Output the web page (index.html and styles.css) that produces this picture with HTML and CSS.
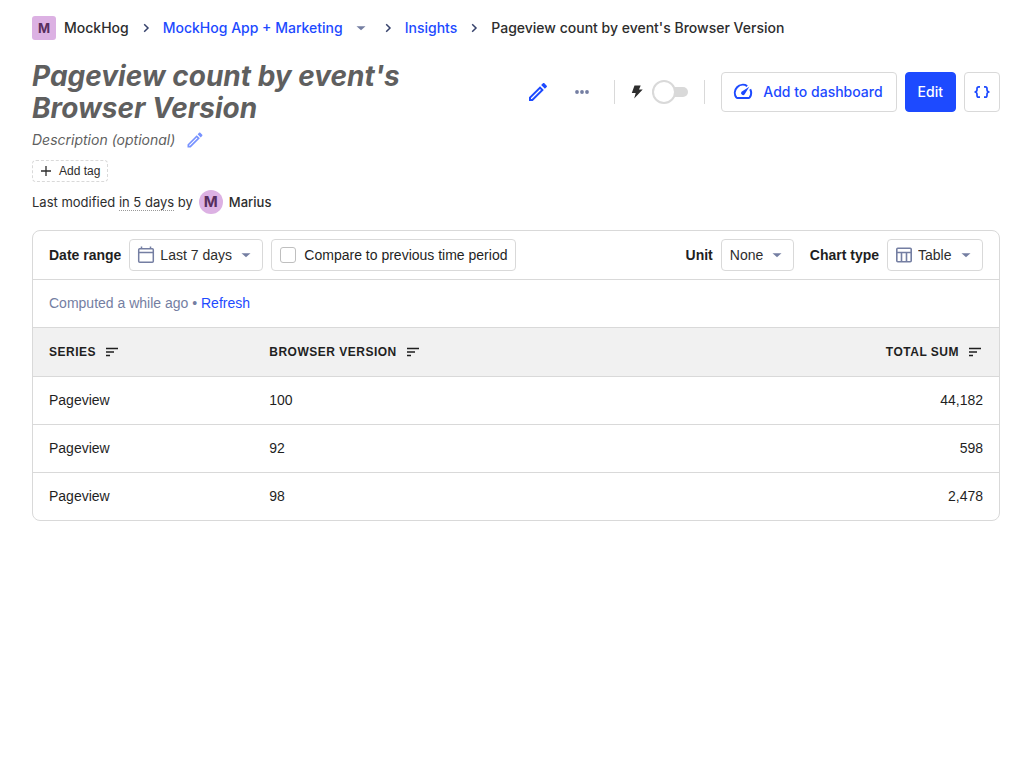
FILE: index.html
```html
<!DOCTYPE html>
<html lang="en">
<head>
<meta charset="utf-8">
<meta name="viewport" content="width=device-width, initial-scale=1">
<title>Pageview count by event's Browser Version</title>
<link rel="stylesheet" href="styles.css">
</head>
<body>
<svg class="sprite" aria-hidden="true">
  <symbol id="chevron" viewBox="0 0 16 16"><path d="M6.200 4.200 10 8l-3.800 3.800" fill="none" stroke="currentColor" stroke-width="1.500"/></symbol>
  <symbol id="caret" viewBox="0 0 24 24"><path d="m6 9.500 6 5.500 6-5.500z" fill="currentColor"/></symbol>
  <symbol id="pencil" viewBox="0 0 24 24"><path d="M14.060 9.020l.92.920L5.920 19H5v-.920l9.060-9.060M17.660 3c-.250 0-.510.100-.700.290l-1.830 1.830 3.750 3.750 1.830-1.830c.390-.390.390-1.020 0-1.410l-2.340-2.340c-.200-.200-.450-.290-.710-.290zm-3.600 3.190L3 17.250V21h3.750L17.810 9.940l-3.750-3.750z" fill="currentColor"/></symbol>
  <symbol id="sort" viewBox="0 0 16 10"><path d="M2 1.500h12M2 5h8M2 8.500h4" fill="none" stroke="currentColor" stroke-width="1.400"/></symbol>
</svg>
<main class="page">
  <nav class="breadcrumbs" aria-label="Breadcrumb">
    <span class="crumb"><span class="letter letter-square">M</span>MockHog</span>
    <svg class="crumb-sep"><use href="#chevron"/></svg>
    <span class="crumb"><a href="#project">MockHog App + Marketing</a><svg class="crumb-caret"><use href="#caret"/></svg></span>
    <svg class="crumb-sep"><use href="#chevron"/></svg>
    <a class="crumb" href="#insights">Insights</a>
    <svg class="crumb-sep"><use href="#chevron"/></svg>
    <span class="crumb">Pageview count by event's Browser Version</span>
  </nav>

  <header class="title-row">
    <h1 class="title">Pageview count by event's Browser Version</h1>
    <button class="icon-button edit-title" type="button" aria-label="Edit name"><svg class="icon-24"><use href="#pencil"/></svg></button>
    <div class="actions">
      <button class="icon-button more" type="button" aria-label="More"><svg class="icon-24" viewBox="0 0 24 24" fill="currentColor"><circle cx="7" cy="12" r="1.900"/><circle cx="12" cy="12" r="1.900"/><circle cx="17" cy="12" r="1.900"/></svg></button>
      <span class="divider"></span>
      <label class="switch">
        <svg class="bolt" viewBox="0 0 12 14" aria-hidden="true"><path d="M3.500.5h6.200L8 4.500h3.700L3.200 13.600 4.700 8H.8z" fill="currentColor"/></svg>
        <input class="switch-input" type="checkbox" role="switch" aria-label="Faster results">
        <span class="switch-track"></span>
      </label>
      <span class="divider"></span>
      <button class="button" type="button"><svg class="gauge" viewBox="0 0 20 18" fill="none" stroke="currentColor" stroke-width="2"><path d="M14.200 3.100A8 8 0 0 0 3.300 14.400Q3.800 15 4.500 15h11Q16.200 15 16.700 14.400A8 8 0 0 0 17.200 6.200"/><path d="M16.300 3.700 11.700 11.300A2 2 0 0 1 8.500 8.700z" fill="currentColor" stroke="none"/></svg>Add to dashboard</button>
      <button class="button button-primary" type="button">Edit</button>
      <button class="button button-code" type="button" aria-label="View source"><svg class="braces" viewBox="0 0 18 14" fill="none" stroke="currentColor" stroke-width="1.700"><path d="M7 1.800H5.800Q4 1.800 4 3.500v1.300Q4 7 1.500 7 4 7 4 9.200v1.300q0 1.700 1.800 1.700H7M11 1.800h1.200Q14 1.800 14 3.500v1.300Q14 7 16.500 7 14 7 14 9.200v1.300q0 1.700-1.800 1.700H11"/></svg></button>
    </div>
  </header>

  <div class="description">Description (optional)<button class="icon-button edit-description" type="button" aria-label="Edit description"><svg class="icon-20"><use href="#pencil"/></svg></button></div>
  <button class="add-tag" type="button"><svg class="plus" viewBox="0 0 10 10"><path d="M5 0v10M0 5h10" stroke="currentColor" stroke-width="1.300"/></svg>Add tag</button>
  <div class="modified">
    <span>Last modified <span class="when">in 5 days</span> by</span>
    <span class="letter letter-round">M</span>
    <span class="author">Marius</span>
  </div>

  <section class="card">
    <div class="toolbar">
      <div class="group">
        <label class="label" for="range">Date range</label>
        <div class="field field-icon">
          <svg class="icon-20" viewBox="0 0 20 20" fill="none" stroke="currentColor" stroke-width="1.500"><rect x="2.700" y="3.700" width="14.600" height="13.600" rx="1"/><path d="M2.500 7.500h15M5.500 1.500V4M14.500 1.500V4"/></svg>
          <select class="select" id="range"><option>Last 7 days</option></select>
          <svg class="caret"><use href="#caret"/></svg>
        </div>
        <label class="field compare"><input class="checkbox" type="checkbox">Compare to previous time period</label>
      </div>
      <div class="group group-right">
        <div class="group">
          <label class="label" for="unit">Unit</label>
          <div class="field">
            <select class="select" id="unit"><option>None</option></select>
            <svg class="caret"><use href="#caret"/></svg>
          </div>
        </div>
        <div class="group">
          <label class="label" for="chart">Chart type</label>
          <div class="field field-icon">
            <svg class="icon-20" viewBox="0 0 20 20" fill="none" stroke="currentColor" stroke-width="1.600"><rect x="2.800" y="3.300" width="14.400" height="13.400" rx="1"/><path d="M2.500 7.500h15M7.500 7.500v9M12.500 7.500v9"/></svg>
            <select class="select" id="chart"><option>Table</option></select>
            <svg class="caret"><use href="#caret"/></svg>
          </div>
        </div>
      </div>
    </div>
    <div class="computed">Computed a while ago • <a href="#refresh">Refresh</a></div>
    <table class="table">
      <thead>
        <tr>
          <th class="col-series"><span class="heading">Series<svg class="sort"><use href="#sort"/></svg></span></th>
          <th><span class="heading">Browser version<svg class="sort"><use href="#sort"/></svg></span></th>
          <th class="number"><span class="heading">Total sum<svg class="sort"><use href="#sort"/></svg></span></th>
        </tr>
      </thead>
      <tbody>
        <tr><td>Pageview</td><td>100</td><td class="number">44,182</td></tr>
        <tr><td>Pageview</td><td>92</td><td class="number">598</td></tr>
        <tr><td>Pageview</td><td>98</td><td class="number">2,478</td></tr>
      </tbody>
    </table>
  </section>
</main>
</body>
</html>
```
FILE: styles.css
```css
:root {
  --blue: #1d4aff;
  --ink: #2d2d2d;
  --strong: #1f1f1f;
  --muted: #747ea2;
  --border: #d9d9d9;
  --body: "Liberation Sans", Arial, sans-serif;
  --brand: Inter, sans-serif;
}

* { box-sizing: border-box; }

body {
  margin: 0;
  background: #fff;
  color: var(--ink);
  font: 14px/20px var(--body);
}

a { color: var(--blue); text-decoration: none; }

button, select, input { margin: 0; font: inherit; color: inherit; }

svg { display: block; flex: none; }

.sprite { position: absolute; width: 0; height: 0; }

.page { padding: 16px 32px; }

.breadcrumbs {
  display: flex;
  align-items: center;
  gap: 9px;
  height: 24px;
  font: 500 14px/24px var(--brand);
}

.crumb { display: flex; align-items: center; gap: 8px; white-space: nowrap; }

.crumb-sep { width: 16px; height: 16px; color: #35416b; }

.crumb-caret { width: 20px; height: 18px; color: var(--muted); }

.letter {
  display: flex;
  align-items: center;
  justify-content: center;
  width: 24px;
  height: 24px;
  background: #dcb1e3;
  color: #572e5e;
  font: 700 13px/24px var(--brand);
}

.letter-square { border-radius: 3px; }

.letter-round { border-radius: 50%; font-size: 15px; }

.title-row {
  display: flex;
  align-items: center;
  gap: 8px;
  margin-top: 20px;
}

.title {
  flex: 1;
  margin: 0;
  color: #5f5f5f;
  font: italic 700 28px/32px var(--brand);
}

.icon-button {
  display: flex;
  align-items: center;
  justify-content: center;
  padding: 0;
  border: 0;
  background: none;
}

.icon-24 { width: 24px; height: 24px; }

.icon-20 { width: 20px; height: 20px; }

.edit-title { width: 40px; height: 40px; color: var(--blue); }

.more { width: 32px; height: 40px; color: var(--muted); }

.actions { display: flex; align-items: center; gap: 8px; }

.divider { width: 1px; height: 24px; margin: 0 8px; background: var(--border); }

.switch { display: flex; align-items: center; gap: 9px; }

.bolt { width: 12px; height: 14px; }

.switch-input { position: absolute; opacity: 0; }

.switch-track {
  display: flex;
  align-items: center;
  width: 36px;
  height: 10px;
  border-radius: 5px;
  background: var(--border);
}

.switch-track::before {
  content: "";
  flex: none;
  width: 20px;
  height: 20px;
  border: 2px solid var(--border);
  border-radius: 50%;
  background: #fff;
}

.switch-input:checked + .switch-track { justify-content: flex-end; }

.button {
  display: flex;
  align-items: center;
  gap: 10px;
  height: 40px;
  padding: 0 13px 0 11px;
  border: 1px solid var(--border);
  border-radius: 4px;
  background: #fff;
  color: var(--blue);
  font: 500 14px/24px var(--brand);
  white-space: nowrap;
}

.button-primary { padding: 0 12px; border-color: var(--blue); background: var(--blue); color: #fff; }

.button-code { padding: 0 8px; }

.gauge { width: 20px; height: 18px; }

.braces { width: 18px; height: 14px; }

.description {
  display: flex;
  align-items: center;
  gap: 6px;
  height: 32px;
  color: #5f5f5f;
  font: italic 400 14px/20px var(--brand);
}

.edit-description { width: 28px; height: 28px; color: #7792ff; }

.add-tag {
  display: flex;
  align-items: center;
  gap: 8px;
  height: 22px;
  margin-top: 4px;
  padding: 0 7px 0 8px;
  border: 1px dashed var(--border);
  border-radius: 4px;
  background: #fff;
  font-size: 12px;
  line-height: 20px;
}

.plus { width: 10px; height: 10px; }

.modified {
  display: flex;
  align-items: center;
  gap: 6px;
  margin: 8px 0 16px;
  font: 400 13px/24px var(--brand);
}

.when { display: inline-block; border-bottom: 1px dotted #999; line-height: 16px; }

.author { font-weight: 500; }

.card { overflow: hidden; border: 1px solid var(--border); border-radius: 8px; color: var(--strong); }

.toolbar {
  display: flex;
  align-items: center;
  justify-content: space-between;
  padding: 8px 16px;
  border-bottom: 1px solid var(--border);
}

.group { display: flex; align-items: center; gap: 8px; }

.group-right { gap: 16px; }

.label { font-weight: 700; }

.field {
  display: flex;
  align-items: center;
  height: 32px;
  padding: 0 7px 0 8px;
  border: 1px solid var(--border);
  border-radius: 4px;
}

.field-icon { gap: 4px; padding-left: 6px; color: var(--muted); }

.select {
  appearance: none;
  padding: 0;
  border: 0;
  background: none;
  color: var(--ink);
}

.caret { width: 18px; height: 18px; margin-left: 4px; color: var(--muted); }

.field-icon .caret { margin-left: 1px; }

.compare { gap: 8px; padding-right: 8px; }

.checkbox {
  appearance: none;
  width: 16px;
  height: 16px;
  border: 1px solid #bfbfbf;
  border-radius: 3px;
}

.computed {
  padding: 13px 16px 14px;
  border-bottom: 1px solid var(--border);
  color: var(--muted);
}

.table { width: 100%; border-collapse: collapse; }

.table th, .table td { height: 48px; padding: 0 16px; text-align: left; }

.table th { background: #f1f1f1; font-size: 12px; text-transform: uppercase; letter-spacing: .5px; }

.table tbody tr { border-top: 1px solid var(--border); }

.table .number { text-align: right; }

.col-series { width: 22.8%; }

.heading { display: inline-flex; align-items: center; gap: 8px; }

.sort { width: 16px; height: 10px; }
```
